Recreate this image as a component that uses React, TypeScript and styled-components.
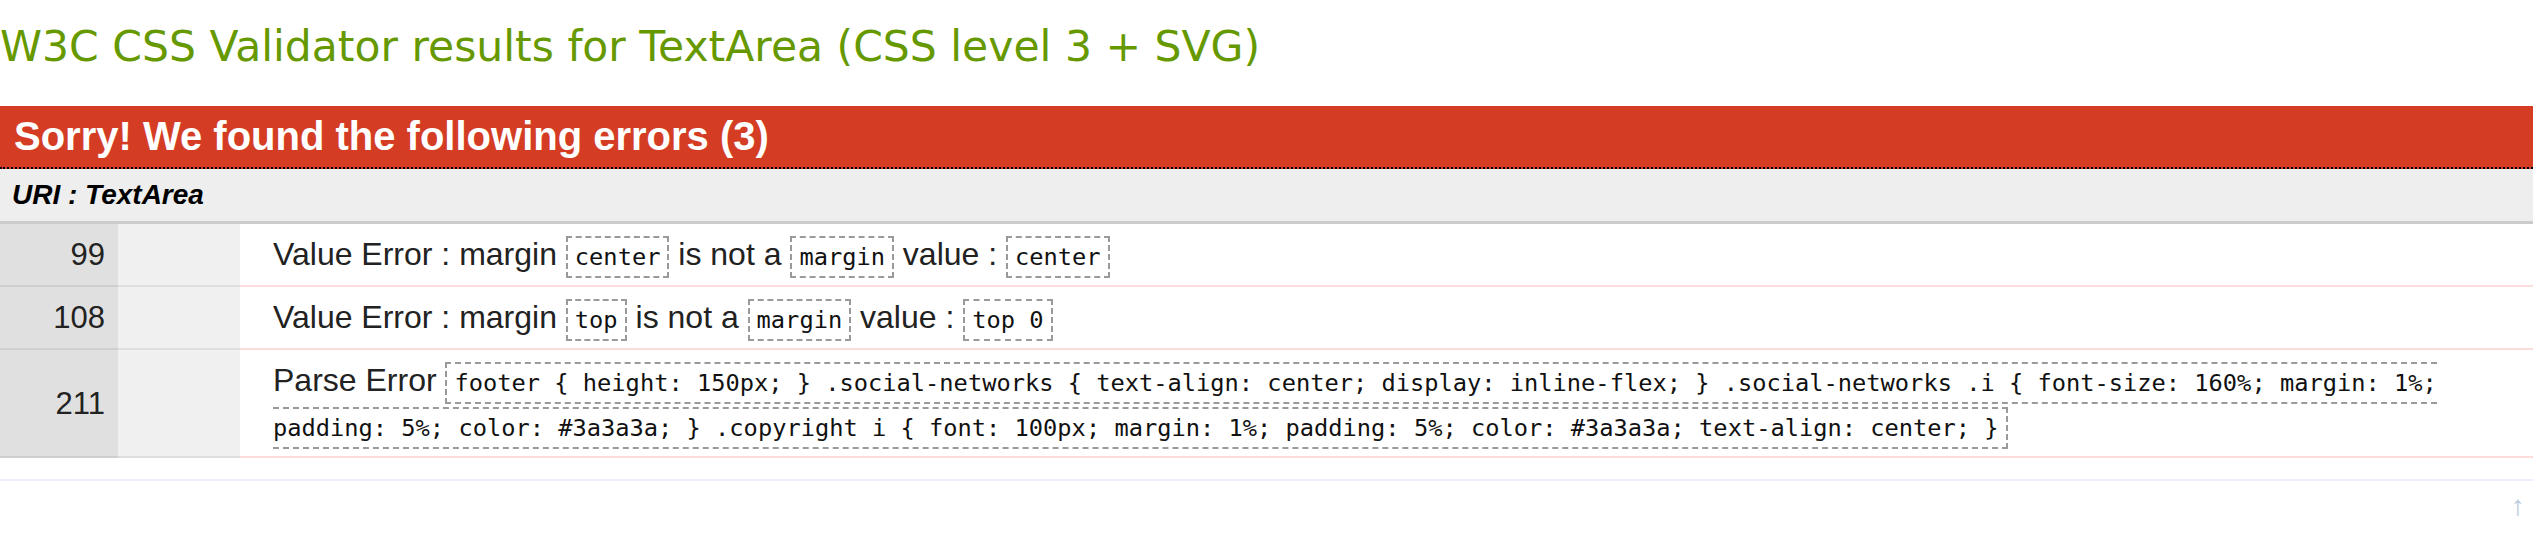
import styled, { createGlobalStyle } from 'styled-components';

const GlobalStyle = createGlobalStyle`
  html, body {
    margin: 0;
    padding: 0;
    background: #fff;
  }
  body {
    font-family: 'Liberation Sans', Arial, sans-serif;
    color: #000;
  }
`;

interface ErrorItem {
  line: number;
  kind: string;
  parts: Array<{ text: string; code?: boolean }>;
}

const errors: ErrorItem[] = [
  {
    line: 99,
    kind: 'Value Error : margin',
    parts: [
      { text: 'center', code: true },
      { text: ' is not a ' },
      { text: 'margin', code: true },
      { text: ' value : ' },
      { text: 'center', code: true },
    ],
  },
  {
    line: 108,
    kind: 'Value Error : margin',
    parts: [
      { text: 'top', code: true },
      { text: ' is not a ' },
      { text: 'margin', code: true },
      { text: ' value : ' },
      { text: 'top 0', code: true },
    ],
  },
  {
    line: 211,
    kind: 'Parse Error',
    parts: [
      {
        text:
          'footer { height: 150px; } .social-networks { text-align: center; display: inline-flex; } .social-networks .i { font-size: 160%; margin: 1%; padding: 5%; color: #3a3a3a; } .copyright i { font: 100px; margin: 1%; padding: 5%; color: #3a3a3a; text-align: center; }',
        code: true,
      },
    ],
  },
];

const Page = styled.div`
  width: 100%;
  overflow: hidden;
`;

const Title = styled.h2`
  margin: 0;
  padding: 22px 0 0 0;
  height: 106px;
  box-sizing: border-box;
  font-family: 'DejaVu Sans', Verdana, sans-serif;
  font-weight: normal;
  font-size: 42.5px;
  line-height: 50px;
  color: #669900;
`;

const ErrorBanner = styled.h3`
  margin: 0;
  height: 61px;
  padding-left: 14px;
  display: flex;
  align-items: center;
  background: #d43d24;
  color: #fff;
  font-size: 40px;
  font-weight: bold;
  border-bottom: 2px dotted #000;
`;

const UriRow = styled.h4`
  margin: 0;
  height: 52px;
  padding-left: 12px;
  display: flex;
  align-items: center;
  background: #eeeeee;
  font-size: 28px;
  font-weight: bold;
  font-style: italic;
  border-bottom: 3px solid #cccccc;
`;

const Table = styled.table`
  width: 100%;
  border-collapse: collapse;
`;

const Row = styled.tr``;

const LineCell = styled.td`
  width: 118px;
  box-sizing: border-box;
  padding: 8px 13px 8px 0;
  text-align: right;
  vertical-align: middle;
  background: #e0e0e0;
  font-size: 31px;
  line-height: 45px;
  color: #222;
  border-bottom: 2px solid #cfcfcf;
`;

const ContextCell = styled.td`
  width: 120px;
  background: #f0f0f0;
  border-bottom: 2px solid #dedede;
`;

const MessageCell = styled.td`
  padding: 8px 60px 8px 33px;
  vertical-align: middle;
  font-size: 32px;
  line-height: 45px;
  color: #222;
  border-bottom: 2px solid #fddcdc;
`;

const Code = styled.span`
  font-family: 'DejaVu Sans Mono', Consolas, monospace;
  font-size: 23.7px;
  line-height: 1;
  padding: 5px 7px;
  border: 2px dashed #9a9a9a;
  color: #111;
`;

const Footer = styled.div`
  margin-top: 21px;
  border-top: 2px solid #eeeeff;
  display: flex;
  justify-content: flex-end;
  padding: 10px 8px 0 0;
`;

const TopLink = styled.span`
  font-size: 28px;
  line-height: 30px;
  color: #b8c8e0;
`;

export default function App() {
  return (
    <Page>
      <GlobalStyle />
      <Title>W3C CSS Validator results for TextArea (CSS level 3 + SVG)</Title>
      <ErrorBanner>Sorry! We found the following errors (3)</ErrorBanner>
      <UriRow>URI : TextArea</UriRow>
      <Table>
        <tbody>
          {errors.map((err) => (
            <Row key={err.line}>
              <LineCell>{err.line}</LineCell>
              <ContextCell />
              <MessageCell>
                {err.kind}{' '}
                {err.parts.map((p, i) =>
                  p.code ? <Code key={i}>{p.text}</Code> : <span key={i}>{p.text}</span>
                )}
              </MessageCell>
            </Row>
          ))}
        </tbody>
      </Table>
      <Footer>
        <TopLink>↑</TopLink>
      </Footer>
    </Page>
  );
}
